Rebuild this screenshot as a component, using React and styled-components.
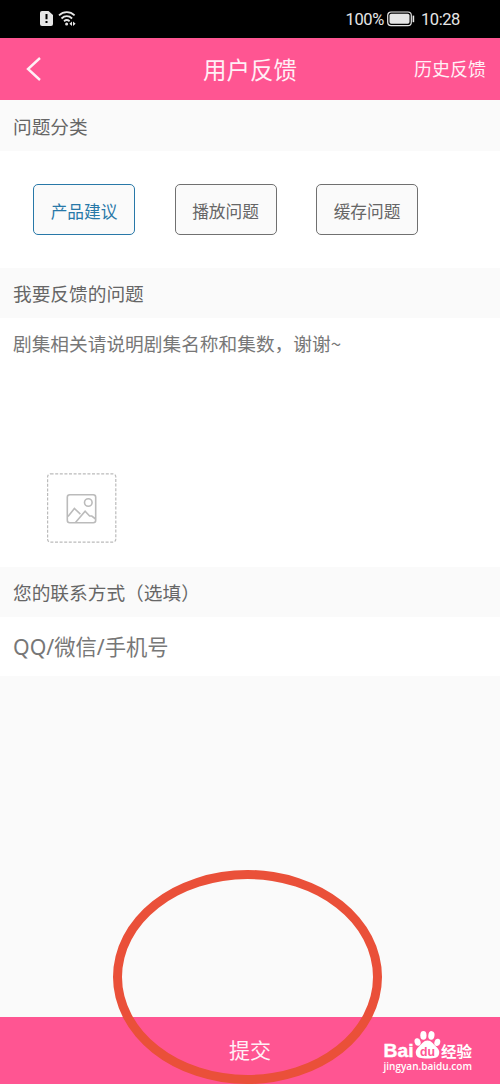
import React from "react";
import styled, { createGlobalStyle } from "styled-components";

const Global = createGlobalStyle`
  * { box-sizing: border-box; }
  body { margin: 0; background: #fafafa; }
`;

const Screen = styled.main`
  position: relative;
  display: flex;
  flex-direction: column;
  width: 500px;
  height: 1084px;
  overflow: hidden;
  background: #fafafa;
  color: #666;
  font-family: "Noto Sans CJK SC", sans-serif;
`;

const StatusBar = styled.div`
  display: flex;
  align-items: center;
  justify-content: space-between;
  height: 37.5px;
  flex: none;
  padding: 0 40px 0 39px;
  background: #000;
  color: #e6e6e6;
`;

const StatusGroup = styled.div`
  display: flex;
  align-items: center;
  gap: ${(p) => p.$gap}px;
`;

const StatusText = styled.span`
  font: 400 16.5px/20px Roboto, sans-serif;
  letter-spacing: ${(p) => p.$spacing || 0}px;
  margin-left: ${(p) => p.$offset || 0}px;
  padding-top: 2px;
`;

const Header = styled.header`
  display: grid;
  grid-template-columns: 1fr auto 1fr;
  align-items: center;
  height: 62.5px;
  flex: none;
  padding: 0 14px 0 25px;
  background: #ff5592;
  color: #fff0f6;
`;

const BackButton = styled.button`
  display: flex;
  width: 18px;
  padding: 0;
  border: 0;
  background: none;
  color: inherit;
`;

const Title = styled.h1`
  margin: 0 11px 0 0;
  font-size: 23.5px;
  line-height: 34px;
  font-weight: 400;
`;

const HistoryLink = styled.a`
  justify-self: end;
  padding-bottom: 1.5px;
  font-size: 18px;
  line-height: 26px;
`;

const SectionLabel = styled.h2`
  display: flex;
  align-items: center;
  height: ${(p) => p.$height}px;
  flex: none;
  margin: 0;
  padding: 0 13px ${(p) => p.$lift || 0}px;
  background: #fafafa;
  font-size: 18.7px;
  line-height: 28px;
  font-weight: 400;
`;

const ChipRow = styled.div`
  display: flex;
  gap: 39.5px;
  height: 117px;
  flex: none;
  padding: 33px 33px 0;
  background: #fff;
`;

const Chip = styled.button`
  width: 102px;
  height: 51px;
  padding: 3px 0 0;
  border: 1.5px solid ${(p) => (p.$active ? "#2878a8" : "#707070")};
  border-radius: 5px;
  background: #fafafa;
  color: ${(p) => (p.$active ? "#2878a8" : "#666")};
  font: 400 16.7px/24px "Noto Sans CJK SC", sans-serif;
`;

const FeedbackBox = styled.div`
  display: flex;
  flex-direction: column;
  justify-content: space-between;
  align-items: flex-start;
  height: 249px;
  flex: none;
  padding: 11px 13px 24.5px;
  background: #fff;
`;

const Hint = styled.p`
  margin: 0;
  font-size: 18.7px;
  line-height: 27px;
  color: #777;
`;

const Upload = styled.button`
  display: flex;
  width: 70px;
  height: 70px;
  margin-left: 33.5px;
  padding: 0;
  border: 0;
  background: none;
`;

const ContactBox = styled.div`
  display: flex;
  align-items: center;
  height: 59px;
  flex: none;
  padding: 1px 13px 0;
  background: #fff;
  color: #777;
  font-family: "Noto Sans", "Noto Sans CJK SC", sans-serif;
  font-size: 21.3px;
  line-height: 30px;
`;

const Submit = styled.button`
  height: 67px;
  flex: none;
  margin-top: auto;
  padding: 0 0 3px;
  border: 0;
  background: #ff5592;
  color: #fff0f6;
  font: 400 21px/30px "Noto Sans CJK SC", sans-serif;
`;

const Ring = styled.div`
  position: absolute;
  left: 112.5px;
  top: 869.5px;
  width: 269px;
  height: 214px;
  border: 9px solid #ea5039;
  border-radius: 50%;
`;

const Watermark = styled.div`
  position: absolute;
  left: 383px;
  top: 1029px;
  color: #fff;
`;

const Logo = styled.svg`
  display: block;
  overflow: visible;
`;

const SimIcon = () => (
  <svg width="15" height="17" viewBox="0 0 15 17">
    <path d="M3 1h6.5L14 5v9a2 2 0 0 1-2 2H3a2 2 0 0 1-2-2V3a2 2 0 0 1 2-2z" fill="#e6e6e6" />
    <path d="M7.5 4v5.2M7.5 11v2" stroke="#000" strokeWidth="2" />
  </svg>
);

const WifiIcon = () => (
  <svg width="18" height="17" viewBox="0 0 18 17" fill="none" stroke="#e6e6e6" strokeWidth="1.8">
    <path d="M1 5.4c4.6-4.3 11-4.3 15.6 0M3.5 8.5c3.2-3 7.4-3 10.6 0M6 11.2c1.8-1.5 3.8-1.5 5.6 0" />
    <circle cx="8.6" cy="14" r="1.5" fill="#e6e6e6" stroke="none" />
    <path d="M14 11.6v4.4l-2.6-2.2zM15 11.6v4.4l2.6-2.2z" fill="#e6e6e6" stroke="none" />
  </svg>
);

const BatteryIcon = () => (
  <svg width="28" height="16" viewBox="0 0 28 16">
    <rect x=".7" y="1" width="23.6" height="13.6" rx="3.4" fill="none" stroke="#e6e6e6" strokeWidth="1.2" />
    <rect x="2.5" y="2.8" width="20" height="10" rx="1.8" fill="#e6e6e6" />
    <path d="M26.4 4.6v6.6" stroke="#e6e6e6" strokeWidth="1.6" />
  </svg>
);

const UploadIcon = () => (
  <svg width="70" height="70" viewBox="0 0 70 70" fill="none" stroke="#bbb">
    <rect x=".6" y=".8" width="68.2" height="68.4" rx="3" strokeDasharray="3 1.6" strokeWidth="1.2" />
    <g strokeWidth="1.6">
      <rect x="20.3" y="21.8" width="28.4" height="28" rx="2.5" />
      <circle cx="41.3" cy="29.5" r="3.8" />
      <path d="M21 43.5l6.4-8 6 5.7M28.5 49.5l9.6-11.3 4.5 4.8h2.2l3.8 3" />
    </g>
  </svg>
);

const chips = ["产品建议", "播放问题", "缓存问题"];

export default function App() {
  return (
    <Screen>
      <Global />
      <StatusBar>
        <StatusGroup $gap={4}>
          <SimIcon />
          <WifiIcon />
        </StatusGroup>
        <StatusGroup $gap={3}>
          <StatusText $spacing={-0.4}>100%</StatusText>
          <BatteryIcon />
          <StatusText $spacing={-0.4} $offset={3}>10:28</StatusText>
        </StatusGroup>
      </StatusBar>
      <Header>
        <BackButton aria-label="返回">
          <svg width="18" height="26" viewBox="0 0 18 26" fill="none" stroke="currentColor" strokeWidth="2.4">
            <path d="M15 2L3 13l12 11" />
          </svg>
        </BackButton>
        <Title>用户反馈</Title>
        <HistoryLink>历史反馈</HistoryLink>
      </Header>
      <SectionLabel $height={51}>问题分类</SectionLabel>
      <ChipRow>
        {chips.map((name, i) => (
          <Chip key={name} $active={i === 0}>{name}</Chip>
        ))}
      </ChipRow>
      <SectionLabel $height={50}>我要反馈的问题</SectionLabel>
      <FeedbackBox>
        <Hint>剧集相关请说明剧集名称和集数，谢谢~</Hint>
        <Upload aria-label="添加图片"><UploadIcon /></Upload>
      </FeedbackBox>
      <SectionLabel $height={50}>您的联系方式（选填）</SectionLabel>
      <ContactBox>QQ/微信/手机号</ContactBox>
      <Submit>提交</Submit>
      <Ring />
      <Watermark>
        <Logo width="92" height="45" viewBox="0 0 92 45" fill="#fff">
          <text x="0.5" y="27.5" fontFamily="Liberation Sans, sans-serif" fontWeight="700" fontSize="19" stroke="#fff" strokeWidth=".4" textLength="30" lengthAdjust="spacingAndGlyphs">Bai</text>
          <ellipse cx="34.6" cy="13" rx="3" ry="3.8" transform="rotate(-15 34.6 13)" />
          <ellipse cx="40.4" cy="6.4" rx="3.1" ry="4.3" />
          <ellipse cx="48.4" cy="6.4" rx="3.1" ry="4.3" transform="rotate(8 48.4 6.4)" />
          <ellipse cx="54.3" cy="13.4" rx="2.9" ry="3.7" transform="rotate(15 54.3 13.4)" />
          <path d="M44.5 11.5c4 0 5.5 3.2 8 5.5c3 2.7 4.5 5 3.5 8.3c-1 3.6-4.5 4.2-11.5 4.2s-10.5-.6-11.5-4.2c-1-3.3.5-5.6 3.5-8.3c2.5-2.3 4-5.5 8-5.5z" />
          <text x="37" y="26.5" fill="#ff5592" fontFamily="Liberation Sans, sans-serif" fontWeight="700" fontSize="13" textLength="15" lengthAdjust="spacingAndGlyphs">du</text>
          <text x="58" y="27.5" fontFamily="Noto Sans CJK SC, sans-serif" fontWeight="700" fontSize="15" textLength="31" lengthAdjust="spacingAndGlyphs">经验</text>
          <text x="0.5" y="41" fontFamily="Open Sans, sans-serif" fontWeight="600" fontSize="11" textLength="88.5" lengthAdjust="spacingAndGlyphs">jingyan.baidu.com</text>
        </Logo>
      </Watermark>
    </Screen>
  );
}
